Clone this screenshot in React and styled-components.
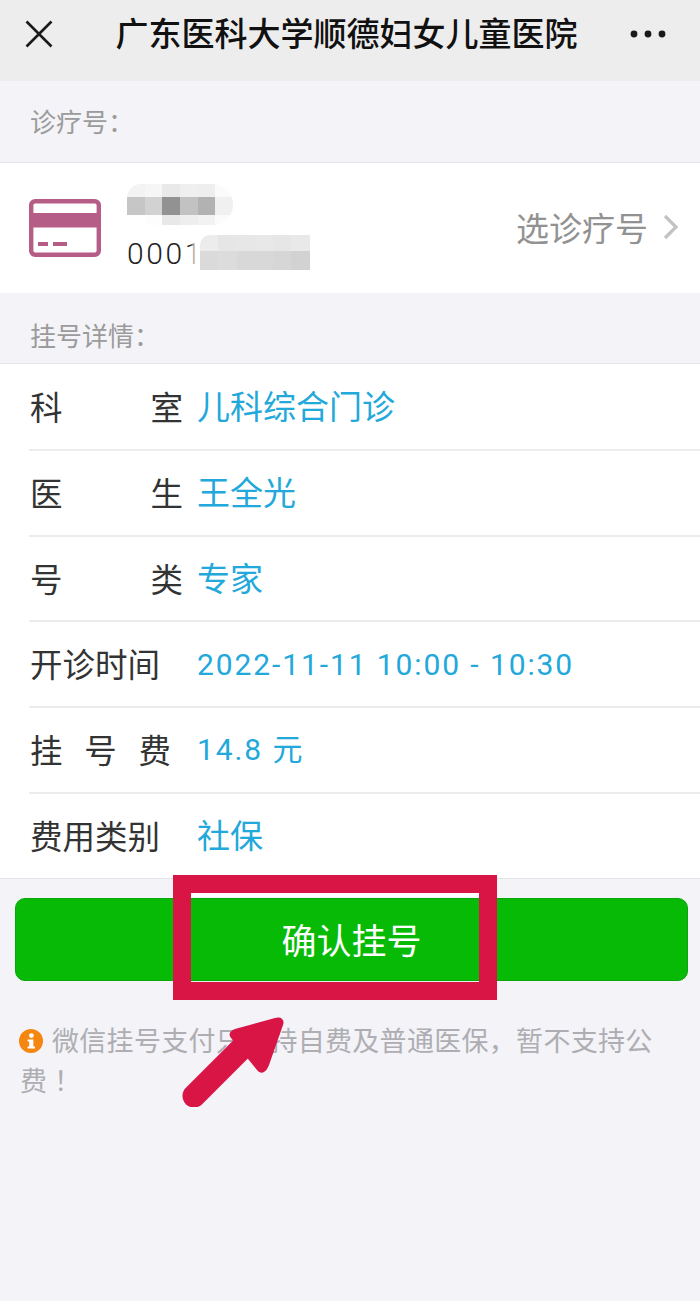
import React from 'react';
import styled, { createGlobalStyle } from 'styled-components';

const GlobalStyle = createGlobalStyle`
  html, body {
    margin: 0;
    padding: 0;
    background: #f3f3f8;
  }
  * {
    box-sizing: border-box;
  }
`;

const FONT = '"Noto Sans CJK SC", sans-serif';
const LATIN_FONT = 'Roboto, "Noto Sans CJK SC", sans-serif';

const rows = [
  { label: ['科', '室'], value: '儿科综合门诊', width: 153 },
  { label: ['医', '生'], value: '王全光', width: 153 },
  { label: ['号', '类'], value: '专家', width: 153 },
  { label: ['开诊时间'], value: '2022-11-11 10:00 - 10:30', latin: true },
  { label: ['挂', '号', '费'], value: '14.8 元', width: 141, latin: true },
  { label: ['费用类别'], value: '社保' },
];

const nameTiles = [
  ['#f3f3f3', '#f6f6f6', '#e9e9e9', '#efefef', '#eeeeee', '#fbfbfb'],
  ['#c6c6c6', '#d2d2d2', '#929292', '#c2c2c2', '#b2b2b2', '#f0f0f0'],
  ['#ffffff', '#fdfdfd', '#e8e8e8', '#eeeeee', '#f2f2f2', '#fbfbfb'],
];

const numberTiles = [
  ['#ececec', '#e6e6e6', '#e7e7e7', '#e8e8e8', '#e6e6e6', '#e9e9e9'],
  ['#dadada', '#dcdcdc', '#d8d8d8', '#d8d8d8', '#d6d6d6', '#d2d2d2'],
];

const CloseIcon = () => (
  <svg width="28" height="28" viewBox="0 0 28 28" fill="none" stroke="#1a1a1a" strokeWidth="2.6">
    <path d="M1.5 1.5 L26.5 26.5 M26.5 1.5 L1.5 26.5" />
  </svg>
);

const MoreIcon = () => (
  <svg width="36" height="8" viewBox="0 0 36 8" fill="#1a1a1a">
    <circle cx="4" cy="4" r="3.4" />
    <circle cx="18" cy="4" r="3.4" />
    <circle cx="32" cy="4" r="3.4" />
  </svg>
);

const CardIcon = () => (
  <svg width="72" height="58" viewBox="0 0 72 58">
    <rect x="2.2" y="2.2" width="67.6" height="53.6" rx="4" fill="#fff" stroke="#b55d87" strokeWidth="4.4" />
    <rect x="2" y="14" width="68" height="14.5" fill="#b55d87" />
    <rect x="9" y="43" width="10" height="4" fill="#b55d87" />
    <rect x="24" y="43" width="14" height="4" fill="#b55d87" />
  </svg>
);

const ChevronIcon = () => (
  <svg width="16" height="26" viewBox="0 0 16 26" fill="none" stroke="#c2c2c2" strokeWidth="3.2">
    <path d="M2 2 L13 13 L2 24" />
  </svg>
);

const InfoIcon = () => (
  <InfoSvg width="24" height="24" viewBox="0 0 24 24">
    <circle cx="12" cy="12" r="12" fill="#f5860f" />
    <circle cx="12.4" cy="6.6" r="2.4" fill="#fff" />
    <path d="M8.6 10.4 H14.4 V17.4 H16 V19.6 H8.6 V17.4 H10.2 V12.6 H8.6 Z" fill="#fff" />
  </InfoSvg>
);

const ArrowMark = () => (
  <ArrowSvg width="110" height="100" viewBox="0 0 110 100">
    <path d="M17 89 L68 38" stroke="#d91546" strokeWidth="23" strokeLinecap="round" fill="none" />
    <path
      d="M58 22 L98 11 C104 9 108 13 106 18 L92 58 C89 66 84 68 80 63 L54 31 C51 27 53 24 58 22 Z"
      fill="#d91546"
    />
  </ArrowSvg>
);

const Mosaic = ({ tiles, heights, ...rest }) => (
  <MosaicBox {...rest}>
    {tiles.map((line, r) => (
      <MosaicRow key={r} $height={heights[r]}>
        {line.map((color, c) => (
          <MosaicTile key={c} $color={color} />
        ))}
      </MosaicRow>
    ))}
  </MosaicBox>
);

export default function App() {
  return (
    <Page>
      <GlobalStyle />
      <Header>
        <HeaderSide>
          <CloseIcon />
        </HeaderSide>
        <Title>广东医科大学顺德妇女儿童医院</Title>
        <HeaderSide $right>
          <MoreIcon />
        </HeaderSide>
      </Header>

      <SectionLabel $height={81} $bottom={2}>诊疗号：</SectionLabel>
      <PatientCard>
        <CardIcon />
        <PatientText>
          <PatientNumber>0001</PatientNumber>
          <NameBlur tiles={nameTiles} heights={[13, 18, 10]} />
          <NumberBlur tiles={numberTiles} heights={[16, 19]} />
        </PatientText>
        <SelectLink>
          选诊疗号
          <ChevronIcon />
        </SelectLink>
      </PatientCard>

      <SectionLabel $height={70} $top={12}>挂号详情：</SectionLabel>
      <Details>
        {rows.map((row) => (
          <Row key={row.value}>
            <RowLabel $width={row.width}>
              {row.label.map((part) => (
                <span key={part}>{part}</span>
              ))}
            </RowLabel>
            <RowValue $latin={row.latin}>{row.value}</RowValue>
          </Row>
        ))}
      </Details>

      <Actions>
        <ConfirmButton>确认挂号</ConfirmButton>
        <Highlight />
      </Actions>

      <Notice>
        <InfoIcon />
        微信挂号支付只支持自费及普通医保，暂不支持公<NoticeTail>费！</NoticeTail>
        <ArrowMark />
      </Notice>
    </Page>
  );
}

const Page = styled.div`
  position: relative;
  width: 700px;
  height: 1301px;
  overflow: hidden;
  background: #f3f3f8;
  font-family: ${FONT};
`;

const Header = styled.header`
  display: flex;
  align-items: center;
  justify-content: space-between;
  height: 81px;
  padding: 0 34px 13px 25px;
  background: #ededed;
`;

const HeaderSide = styled.div`
  display: flex;
  width: 36px;
  justify-content: ${(p) => (p.$right ? 'flex-end' : 'flex-start')};
`;

const Title = styled.h1`
  margin: 0 0 4px 2px;
  font-size: 33px;
  font-weight: 500;
  color: #111;
  white-space: nowrap;
`;

const SectionLabel = styled.div`
  display: flex;
  align-items: center;
  height: ${(p) => p.$height}px;
  padding: ${(p) => p.$top || 0}px 30px ${(p) => p.$bottom || 0}px;
  font-size: 26px;
  color: #9b9b9b;
`;

const PatientCard = styled.section`
  display: flex;
  align-items: center;
  height: 131px;
  padding: 0 21px 0 29px;
  background: #fff;
  border-top: 1px solid #e4e4e8;
`;

const PatientText = styled.div`
  position: relative;
  flex: 1;
  align-self: stretch;
  display: flex;
  align-items: flex-end;
  margin-left: 26px;
  padding-bottom: 22px;
`;

const PatientNumber = styled.div`
  font-family: ${LATIN_FONT};
  font-size: 30px;
  font-weight: 300;
  letter-spacing: 2.6px;
  color: #222;
`;

const MosaicBox = styled.div`
  position: absolute;
  display: flex;
  flex-direction: column;
  overflow: hidden;
`;

const MosaicRow = styled.div`
  display: flex;
  height: ${(p) => p.$height}px;
`;

const MosaicTile = styled.div`
  width: 18.3px;
  background: ${(p) => p.$color};
`;

const NameBlur = styled(Mosaic)`
  left: 0;
  top: 21px;
  width: 106px;
  border-radius: 14px 20px 20px 0;
`;

const NumberBlur = styled(Mosaic)`
  left: 73px;
  top: 72px;
  border-radius: 10px 0 0 0;
  box-shadow: -5px 0 4px 2px #fff;
`;

const SelectLink = styled.div`
  display: flex;
  align-items: center;
  gap: 15px;
  padding-bottom: 2px;
  font-size: 33px;
  color: #929292;
`;

const Details = styled.section`
  padding-bottom: 0.7px;
  background: #fff;
  border-top: 1px solid #e4e4e8;
  border-bottom: 1px solid #e4e4e8;
`;

const Row = styled.div`
  display: flex;
  align-items: center;
  height: 85.7px;
  margin-left: 29px;
  padding: 0 0 3px 1px;
  border-top: 2px solid #ececec;

  &:first-child {
    height: 85px;
    border-top: 0;
  }
`;

const RowLabel = styled.div`
  flex: none;
  display: flex;
  justify-content: space-between;
  width: ${(p) => (p.$width ? `${p.$width}px` : 'auto')};
  min-width: 131px;
  margin-right: ${(p) => (p.$width ? 167 - p.$width : 36)}px;
  font-size: 32.5px;
  color: #333;
`;

const RowValue = styled.div`
  margin-top: ${(p) => (p.$latin ? 4 : 0)}px;
  font-family: ${(p) => (p.$latin ? LATIN_FONT : FONT)};
  font-size: ${(p) => (p.$latin ? 30 : 33)}px;
  line-height: 46px;
  letter-spacing: ${(p) => (p.$latin ? 1.9 : 0)}px;
  color: #22a8da;
  white-space: pre;
`;

const Actions = styled.div`
  position: relative;
  padding: 19px 12px 0 15px;
`;

const ConfirmButton = styled.button`
  display: block;
  width: 100%;
  height: 83px;
  padding: 0 0 3px;
  border: 1px solid #0aa50a;
  border-radius: 10px;
  background: #06ba06;
  font-family: inherit;
  font-size: 35px;
  color: #fff;
`;

const Highlight = styled.div`
  position: absolute;
  left: 173px;
  top: -4px;
  width: 324px;
  height: 125px;
  border: 18px solid #d91546;
  box-shadow: inset 0 4px 0 #fff, inset 0 -1px 0 #e4f2e4;
`;

const Notice = styled.p`
  position: relative;
  margin: 39px 0 0;
  padding: 0 30px 0 20px;
  font-size: 27px;
  letter-spacing: 0.3px;
  line-height: 40px;
  color: #aeaeb2;
`;

const NoticeTail = styled.span`
  font-family: "Noto Sans CJK TC", sans-serif;
`;

const InfoSvg = styled.svg`
  margin: 0 9px 0 -1px;
  vertical-align: -2px;
`;

const ArrowSvg = styled.svg`
  position: absolute;
  left: 177px;
  top: -13px;
`;
